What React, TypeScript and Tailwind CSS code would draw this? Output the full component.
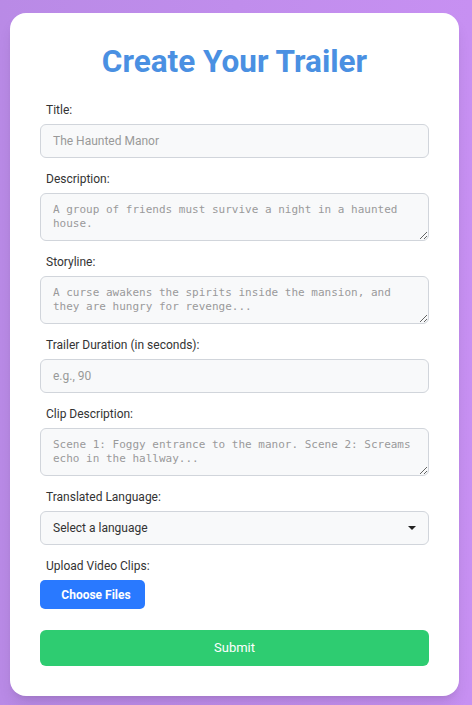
import React from "react";

const labelCls = "block ml-[6px] mb-[5px] text-[12px] leading-[17px] text-[#333]";
const fieldCls =
  "block w-full rounded-[6px] border border-[#d1d5db] bg-[#f8f9fa] px-[12px] text-[#333] outline-none";

const Field: React.FC<React.PropsWithChildren<{ label: string }>> = ({ label, children }) => (
  <div className="mb-[13px]">
    <label className={labelCls}>{label}</label>
    {children}
  </div>
);

const Area: React.FC<{ placeholder: string }> = ({ placeholder }) => (
  <textarea
    placeholder={placeholder}
    className={`${fieldCls} h-[48px] pt-[9px] font-['DejaVu_Sans_Mono',monospace] text-[11px] leading-[14px] placeholder:text-[#9a9a9a]`}
  />
);

export default function App() {
  return (
    <div className="min-h-screen bg-gradient-to-r from-[#b98ae6] to-[#c790f2] pt-[13px] pb-[9px] pl-[10px] font-['Roboto',sans-serif]">
      <div className="w-[449px] rounded-[16px] bg-white p-[30px] shadow-lg">
        <h2 className="mb-[21px] text-center text-[31.5px] font-bold leading-[38px] text-[#4a90e2]">
          Create Your Trailer
        </h2>

        <Field label="Title:">
          <input
            type="text"
            placeholder="The Haunted Manor"
            className={`${fieldCls} h-[34px] text-[12px] placeholder:text-[#999]`}
          />
        </Field>

        <Field label="Description:">
          <Area placeholder="A group of friends must survive a night in a haunted house." />
        </Field>

        <Field label="Storyline:">
          <Area placeholder="A curse awakens the spirits inside the mansion, and they are hungry for revenge..." />
        </Field>

        <Field label="Trailer Duration (in seconds):">
          <input
            type="number"
            placeholder="e.g., 90"
            className={`${fieldCls} h-[34px] text-[12px] placeholder:text-[#999]`}
          />
        </Field>

        <Field label="Clip Description:">
          <Area placeholder="Scene 1: Foggy entrance to the manor. Scene 2: Screams echo in the hallway..." />
        </Field>

        <Field label="Translated Language:">
          <div className="relative">
            <select
              defaultValue=""
              className={`${fieldCls} h-[34px] appearance-none text-[12px] text-[#222]`}
            >
              <option value="">Select a language</option>
              <option value="es">Spanish</option>
              <option value="fr">French</option>
            </select>
            <svg
              className="pointer-events-none absolute right-[13px] top-[15px]"
              width="8"
              height="4"
              viewBox="0 0 8 4"
            >
              <path d="M0 0h8L4 4z" fill="#222" />
            </svg>
          </div>
        </Field>

        <div className="mb-[21px]">
          <label className={labelCls}>Upload Video Clips:</label>
          <button className="h-[29px] w-[105px] rounded-[5px] bg-[#2979ff] pl-[7px] text-[12px] font-bold text-white">
            Choose Files
          </button>
        </div>

        <button className="h-[36px] w-full rounded-[6px] bg-[#2ecc71] text-[13px] text-white">
          Submit
        </button>
      </div>
    </div>
  );
}
